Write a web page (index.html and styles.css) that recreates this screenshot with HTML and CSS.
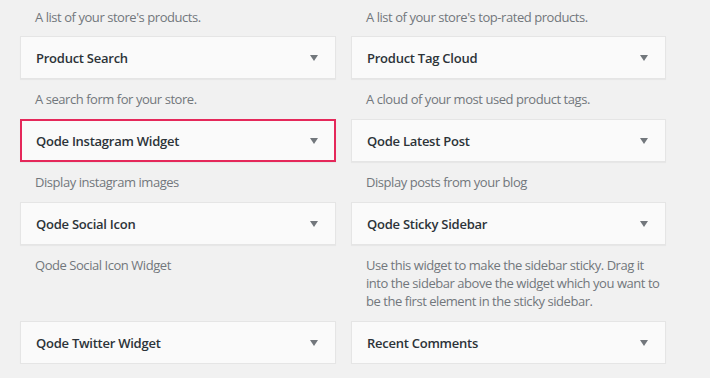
FILE: index.html
```html
<!DOCTYPE html>
<html lang="en">
<head>
    <meta charset="UTF-8">
    <meta name="viewport" content="width=device-width, initial-scale=1.0">
    <title>Widgets</title>
    <link rel="stylesheet" href="styles.css">
</head>
<body>

<div class="widget-list">
    <!-- descriptions of the widgets scrolled off above -->
    <div class="widget">
        <div class="widget-description first">A list of your store's products.</div>
    </div>
    <div class="widget">
        <div class="widget-description first">A list of your store's top-rated products.</div>
    </div>

    <div class="widget">
        <div class="widget-top">
            <span class="widget-title">Product Search</span>
            <span class="widget-arrow"></span>
        </div>
        <div class="widget-description">A search form for your store.</div>
    </div>
    <div class="widget">
        <div class="widget-top">
            <span class="widget-title">Product Tag Cloud</span>
            <span class="widget-arrow"></span>
        </div>
        <div class="widget-description">A cloud of your most used product tags.</div>
    </div>

    <div class="widget is-active">
        <div class="widget-top">
            <span class="widget-title">Qode Instagram Widget</span>
            <span class="widget-arrow"></span>
        </div>
        <div class="widget-description">Display instagram images</div>
    </div>
    <div class="widget">
        <div class="widget-top">
            <span class="widget-title">Qode Latest Post</span>
            <span class="widget-arrow"></span>
        </div>
        <div class="widget-description">Display posts from your blog</div>
    </div>

    <div class="widget">
        <div class="widget-top">
            <span class="widget-title">Qode Social Icon</span>
            <span class="widget-arrow"></span>
        </div>
        <div class="widget-description">Qode Social Icon Widget</div>
    </div>
    <div class="widget">
        <div class="widget-top">
            <span class="widget-title">Qode Sticky Sidebar</span>
            <span class="widget-arrow"></span>
        </div>
        <div class="widget-description">Use this widget to make the sidebar sticky. Drag it into the sidebar above the widget which you want to be the first element in the sticky sidebar.</div>
    </div>

    <div class="widget">
        <div class="widget-top">
            <span class="widget-title">Qode Twitter Widget</span>
            <span class="widget-arrow"></span>
        </div>
    </div>
    <div class="widget">
        <div class="widget-top">
            <span class="widget-title">Recent Comments</span>
            <span class="widget-arrow"></span>
        </div>
    </div>
</div>

</body>
</html>
```

FILE: styles.css
```css
body {
    font-family: "Open Sans", "Noto Sans", sans-serif;
    font-size: 13px;
    background-color: #f1f1f1;
    margin: 0;
    color: #444;
}

.widget-list {
    display: grid;
    grid-template-columns: 316px 315px;
    column-gap: 15px;
    align-items: start;
    padding-left: 20px;
}

.widget-top {
    display: flex;
    justify-content: space-between;
    align-items: center;
    height: 41px;
    padding: 0 17px 0 15px;
    background-color: #fafafa;
    border: 1px solid #e5e5e5;
    box-shadow: 0 1px 1px rgba(0, 0, 0, 0.04);
}

.widget.is-active .widget-top {
    height: 39px;
    padding: 0 16px 0 14px;
    border: 2px solid #e5285a;
}

.widget-title {
    font-weight: 600;
    color: #2c3338;
    letter-spacing: -0.25px;
}

.widget-arrow {
    width: 0;
    height: 0;
    border-left: 4px solid transparent;
    border-right: 4px solid transparent;
    border-top: 6px solid #72777c;
}

.widget-description {
    padding: 11px 2px 11px 15px;
    line-height: 18px;
    color: #72777c;
    letter-spacing: -0.45px;
}

.widget-description.first {
    padding-top: 8px;
    padding-bottom: 10px;
}
```
